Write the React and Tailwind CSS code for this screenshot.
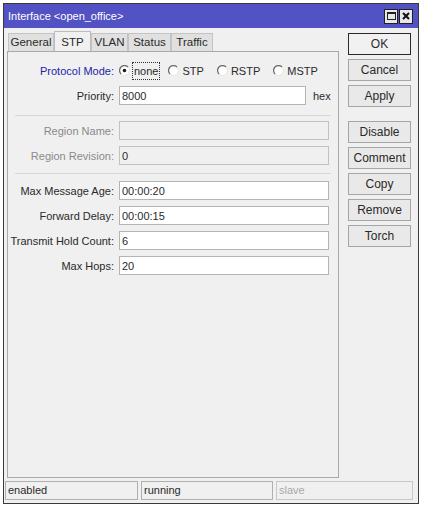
import React from 'react';

const font = { fontFamily: '"Liberation Sans", Arial, sans-serif' };

function Radio({ checked }) {
  return (
    <svg width="11" height="11" viewBox="0 0 11 11" className="shrink-0">
      <circle cx="5.5" cy="5.5" r="4.5" fill="#ffffff" />
      <path d="M9 2 A4.5 4.5 0 0 0 2 9" fill="none" stroke="#6d6d6d" strokeWidth="1.3" />
      <path d="M2 9 A4.5 4.5 0 0 0 9 2" fill="none" stroke="#e6e6e6" strokeWidth="1" />
      {checked && <circle cx="5.5" cy="5.5" r="1.8" fill="#1a1a1a" />}
    </svg>
  );
}

function Row({ label, value, disabled, labelClass, children, className = '' }) {
  return (
    <div className={`flex items-center h-[19px] ${className}`}>
      <div className={`w-[107px] text-right pr-[1px] ${labelClass || (disabled ? 'text-[#8a8a8a]' : 'text-[#2a2a2a]')}`}>
        {label}:
      </div>
      <div className="ml-[4px] flex items-center">
        {children || (
          <div
            className={`w-[210px] h-[19px] border px-[2px] flex items-center ${
              disabled ? 'bg-[#f0f0f0] border-[#c2c2c2] text-[#2a2a2a]' : 'bg-white border-[#b4b4b4] text-[#2a2a2a]'
            }`}
          >
            {value}
          </div>
        )}
      </div>
    </div>
  );
}

function Btn({ label, primary }) {
  return (
    <div
      className={`h-[22px] w-[63px] flex items-center justify-center text-[12px] text-[#2a2a2a] ${
        primary ? 'border border-[#2a2a2a] bg-[#f1f1f1]' : 'border border-[#a6a6a6] bg-[#e9e9e9]'
      }`}
    >
      {label}
    </div>
  );
}

const tabs = [
  { t: 'General', w: 'w-[46px]' },
  { t: 'STP', w: 'w-[37px]' },
  { t: 'VLAN', w: 'w-[37px]' },
  { t: 'Status', w: 'w-[43px]' },
  { t: 'Traffic', w: 'w-[42px]' },
];

export default function App() {
  return (
    <div className="w-[425px] h-[510px] bg-white pt-[3px] pl-[3px]" style={font}>
      <div className="w-[416px] h-[501px] border border-[#3a3a3a] bg-[#f0f0f0] flex flex-col text-[11px]">
        {/* title bar */}
        <div className="h-[26px] bg-[#5252c4] flex items-center justify-between pl-[4px] pr-[5px]">
          <span className="text-white text-[11px]">Interface &lt;open_office&gt;</span>
          <div className="flex gap-[1px]">
            <div className="w-[14px] h-[15px] bg-[#e8e8e8] border border-[#202020] flex items-center justify-center">
              <div className="w-[9px] h-[8px] border border-[#202020] border-t-2" />
            </div>
            <div className="w-[14px] h-[15px] bg-[#e8e8e8] border border-[#202020] flex items-center justify-center">
              <svg width="8" height="8" viewBox="0 0 8 8">
                <path d="M1 1 L7 7 M7 1 L1 7" stroke="#101010" strokeWidth="2" />
              </svg>
            </div>
          </div>
        </div>

        <div className="flex flex-1">
          {/* left column */}
          <div className="ml-[3px] mt-[4px] flex flex-col">
            <div className="flex items-end h-[19px] pl-[1px]">
              {tabs.map(({ t, w }) => (
                <div
                  key={t}
                  className={
                    t === 'STP'
                      ? `${w} h-[21px] -mb-[1px] flex items-center justify-center bg-[#f0f0f0] border border-b-0 border-[#bdbdbd] text-[11.5px] text-[#2a2a2a]`
                      : `${w} h-[18px] flex items-center justify-center bg-[#e0e0e0] border border-[#c4c4c4] border-b-0 text-[11.5px] text-[#2a2a2a]`
                  }
                >
                  {t}
                </div>
              ))}
            </div>
            <div className="w-[332px] h-[427px] border border-[#a9a9a9] pt-[9px]">
              <Row label="Protocol Mode" labelClass="text-[#2323a8]">
                <div className="flex items-center text-[#2a2a2a]">
                  <Radio checked />
                  <span className="ml-[2px] px-[1px] border border-dotted border-[#333]">none</span>
                  <span className="ml-[8px]"><Radio /></span>
                  <span className="ml-[3px]">STP</span>
                  <span className="ml-[13px]"><Radio /></span>
                  <span className="ml-[3px]">RSTP</span>
                  <span className="ml-[13px]"><Radio /></span>
                  <span className="ml-[3px]">MSTP</span>
                </div>
              </Row>
              <Row label="Priority" className="mt-[6px]">
                <div className="w-[187px] h-[19px] border border-[#b4b4b4] bg-white px-[2px] flex items-center text-[#2a2a2a]">
                  8000
                </div>
                <span className="ml-[7px] text-[#2a2a2a]">hex</span>
              </Row>
              <div className="mx-[7px] mt-[10px] mb-[5px] h-px bg-[#d7d7d7]" />
              <Row label="Region Name" value="" disabled />
              <Row label="Region Revision" value="0" disabled className="mt-[6px]" />
              <div className="mx-[7px] mt-[8px] mb-[7px] h-px bg-[#d7d7d7]" />
              <Row label="Max Message Age" value="00:00:20" />
              <Row label="Forward Delay" value="00:00:15" className="mt-[6px]" />
              <Row label="Transmit Hold Count" value="6" className="mt-[6px]" />
              <Row label="Max Hops" value="20" className="mt-[6px]" />
            </div>
          </div>

          {/* right buttons */}
          <div className="ml-[9px] mt-[5px] flex flex-col gap-[4px]">
            <Btn label="OK" primary />
            <Btn label="Cancel" />
            <Btn label="Apply" />
            <div className="h-[6px]" />
            <Btn label="Disable" />
            <Btn label="Comment" />
            <Btn label="Copy" />
            <Btn label="Remove" />
            <Btn label="Torch" />
          </div>
        </div>

        {/* status bar */}
        <div className="flex gap-[3px] ml-[1px] mt-[3px] mb-[3px] h-[20px]">
          <div className="w-[133px] border border-[#b0b0b0] flex items-center pl-[2px] text-[#2a2a2a]">enabled</div>
          <div className="w-[132px] border border-[#b0b0b0] flex items-center pl-[2px] text-[#2a2a2a]">running</div>
          <div className="w-[137px] border border-[#c8c8c8] flex items-center pl-[2px] text-[#a8a8a8]">slave</div>
        </div>
      </div>
    </div>
  );
}
